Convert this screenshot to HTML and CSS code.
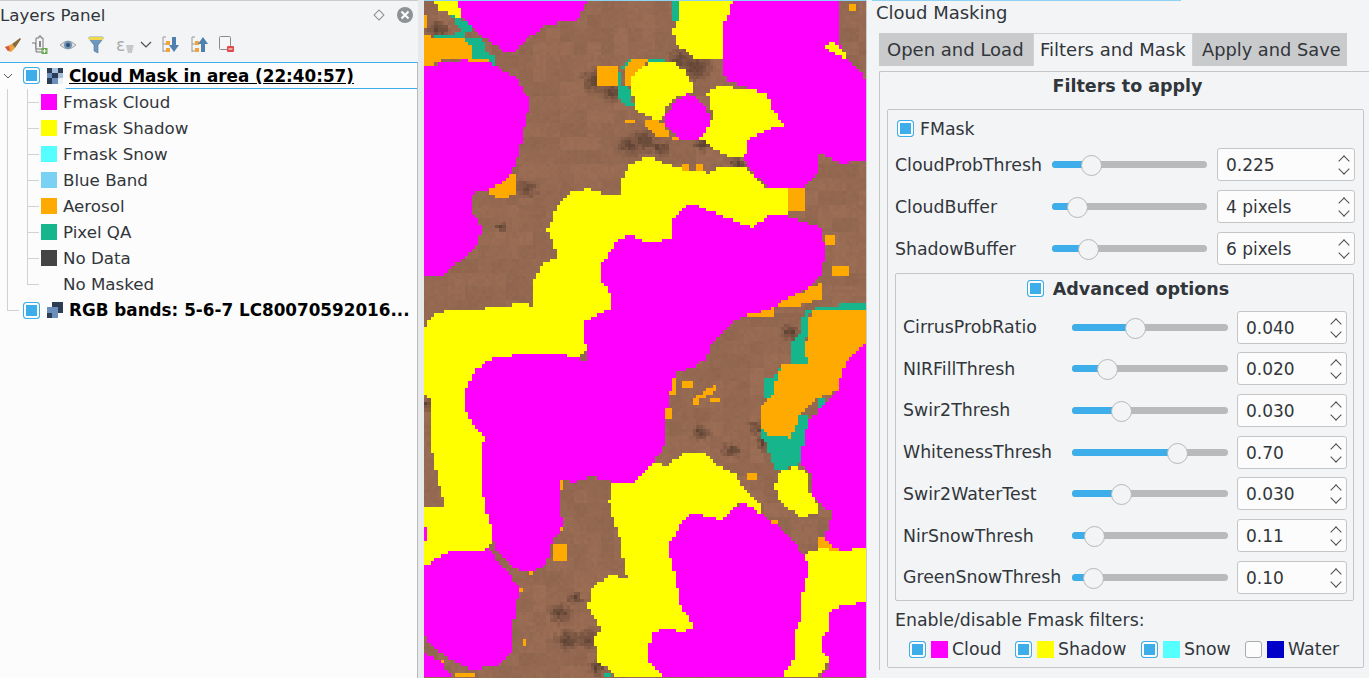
FILE: index.html
```html
<!DOCTYPE html>
<html lang="en">
<head>
  <meta charset="UTF-8">
  <title>Cloud Masking</title>
  <link rel="stylesheet" href="styles.css">
</head>
<body>
  <div class="app">
    <div class="layers">
      <div class="dock-title">
        <span class="dock-name">Layers Panel</span>
        <span class="dock-float"></span>
        <span class="dock-close">
          <svg width="16" height="16" viewBox="0 0 16 16"><path d="M4.5 4.5l7 7M11.5 4.5l-7 7" stroke="#fff" stroke-width="2" fill="none"/></svg>
        </span>
      </div>
      <div class="toolbar">
        <svg class="tool tool-brush" width="18" height="18" viewBox="0 0 18 18">
          <path d="M1 11l7-3 3 4-4 4-3-1z" fill="#e8a33d"/><path d="M1 11l4-1 1 4-2 1z" fill="#d9534f"/><path d="M8 8l8-6 1 1-6 9z" fill="#8a6a3a"/>
        </svg>
        <svg class="tool tool-add" width="18" height="20" viewBox="0 0 18 20">
          <path d="M1 8h4v9h7" fill="#eee" stroke="#777"/><path d="M5 3h3V1h2v2h2v11H5z" fill="#f4f4f4" stroke="#777"/><rect x="8" y="6" width="2" height="6" fill="#888"/><rect x="10.500" y="13" width="6" height="6" fill="#6aa84f"/><path d="M13.500 14v4M11.500 16h4" stroke="#fff"/>
        </svg>
        <svg class="tool tool-eye" width="18" height="14" viewBox="0 0 18 14">
          <path d="M1 7q8-8 16 0q-8 8-16 0z" fill="#dcdcdc" stroke="#aaa"/><circle cx="9" cy="7" r="4" fill="#6f93b5"/><circle cx="9" cy="7" r="2" fill="#2f4f6f"/>
        </svg>
        <svg class="tool tool-funnel" width="16" height="18" viewBox="0 0 16 18">
          <path d="M1 1h14v2l-5 6v8l-4-2V9L1 3z" fill="#6f97bd" stroke="#4d7396" stroke-width=".6"/><rect x="1" y="1" width="14" height="3" fill="#f0d74c"/>
        </svg>
        <span class="tool tool-expr">ε<svg width="10" height="8" viewBox="0 0 10 8"><path d="M1 0h8L7 8H3z" fill="#c6c8ca"/></svg></span>
        <svg class="tool tool-more" width="12" height="8" viewBox="0 0 12 8"><path d="M1 1l5 5 5-5" fill="none" stroke="#4d4d4d" stroke-width="1.200"/></svg>
        <svg class="tool tool-down" width="17" height="17" viewBox="0 0 17 17">
          <path d="M1 1h3M1 1v15M1 8h3M1 15h3" stroke="#999" fill="none"/><rect x="4" y="5" width="4" height="4" fill="#f2a33a"/><rect x="4" y="12" width="4" height="4" fill="#f2a33a"/><path d="M10 1h4v8h3l-5 7-5-7h3z" fill="#4f81b0"/>
        </svg>
        <svg class="tool tool-up" width="17" height="17" viewBox="0 0 17 17">
          <path d="M1 1h3M1 1v15M1 8h3M1 15h3" stroke="#999" fill="none"/><rect x="4" y="5" width="4" height="4" fill="#f2a33a"/><rect x="4" y="12" width="4" height="4" fill="#f2a33a"/><path d="M10 16h4V8h3l-5-7-5 7h3z" fill="#4f81b0"/>
        </svg>
        <svg class="tool tool-remove" width="15" height="17" viewBox="0 0 15 17">
          <rect x=".5" y=".5" width="11" height="13" rx="1" fill="#f6f6f6" stroke="#8b8b8b"/><rect x="8" y="10" width="7" height="6" rx="1" fill="#df4a4a"/><rect x="9.500" y="12.500" width="4" height="1" fill="#fff"/>
        </svg>
      </div>
      <div class="tree">
        <div class="tree-row root-row current">
          <svg class="twisty" width="10" height="6" viewBox="0 0 10 6"><path d="M1 1l4 4 4-4" fill="none" stroke="#555"/></svg>
          <span class="check on"></span>
          <span class="raster-icon"><i></i><i></i><i></i><i></i><i></i><i></i><i></i><i></i><i></i></span>
          <span class="layer-name underlined">Cloud Mask in area (22:40:57)</span>
        </div>
        <div class="legend">
          <div class="legend-row"><span class="swatch" style="background:#ff00ff"></span>Fmask Cloud</div>
          <div class="legend-row"><span class="swatch" style="background:#ffff00"></span>Fmask Shadow</div>
          <div class="legend-row"><span class="swatch" style="background:#55ffff"></span>Fmask Snow</div>
          <div class="legend-row"><span class="swatch" style="background:#79d2f4"></span>Blue Band</div>
          <div class="legend-row"><span class="swatch" style="background:#ffaa00"></span>Aerosol</div>
          <div class="legend-row"><span class="swatch" style="background:#17b58c"></span>Pixel QA</div>
          <div class="legend-row"><span class="swatch" style="background:#444444"></span>No Data</div>
          <div class="legend-row last"><span class="swatch"></span>No Masked</div>
        </div>
        <div class="tree-row top-row">
          <span class="check on"></span>
          <span class="raster-icon alt"><i></i><i></i><i></i><i></i><i></i><i></i><i></i><i></i><i></i></span>
          <span class="layer-name">RGB bands: 5-6-7 LC80070592016...</span>
        </div>
      </div>
    </div>

    <div class="map">
      <canvas id="map-canvas" width="130" height="200"></canvas>
    </div>

    <div class="masking">
      <div class="masking-title">Cloud Masking</div>
      <div class="tabs">
        <div class="tab">Open and Load</div>
        <div class="tab active">Filters and Mask</div>
        <div class="tab">Apply and Save</div>
      </div>
      <div class="tab-page">
        <div class="page-heading">Filters to apply</div>
        <div class="group">
          <div class="fmask-head"><span class="check on"></span>FMask</div>

          <div class="param"><span class="param-label">CloudProbThresh</span>
            <div class="slider"><div class="slider-fill" style="width:26%"></div></div>
            <div class="spin">0.225<span class="arrows"></span></div></div>
          <div class="param"><span class="param-label">CloudBuffer</span>
            <div class="slider"><div class="slider-fill" style="width:17%"></div></div>
            <div class="spin">4 pixels<span class="arrows"></span></div></div>
          <div class="param"><span class="param-label">ShadowBuffer</span>
            <div class="slider"><div class="slider-fill" style="width:24%"></div></div>
            <div class="spin">6 pixels<span class="arrows"></span></div></div>

          <div class="advanced">
            <div class="advanced-head"><span class="check on"></span>Advanced options</div>
            <div class="param"><span class="param-label">CirrusProbRatio</span>
              <div class="slider"><div class="slider-fill" style="width:41%"></div></div>
              <div class="spin">0.040<span class="arrows"></span></div></div>
            <div class="param"><span class="param-label">NIRFillThresh</span>
              <div class="slider"><div class="slider-fill" style="width:23%"></div></div>
              <div class="spin">0.020<span class="arrows"></span></div></div>
            <div class="param"><span class="param-label">Swir2Thresh</span>
              <div class="slider"><div class="slider-fill" style="width:32%"></div></div>
              <div class="spin">0.030<span class="arrows"></span></div></div>
            <div class="param"><span class="param-label">WhitenessThresh</span>
              <div class="slider"><div class="slider-fill" style="width:68%"></div></div>
              <div class="spin">0.70<span class="arrows"></span></div></div>
            <div class="param"><span class="param-label">Swir2WaterTest</span>
              <div class="slider"><div class="slider-fill" style="width:32%"></div></div>
              <div class="spin">0.030<span class="arrows"></span></div></div>
            <div class="param"><span class="param-label">NirSnowThresh</span>
              <div class="slider"><div class="slider-fill" style="width:15%"></div></div>
              <div class="spin">0.11<span class="arrows"></span></div></div>
            <div class="param"><span class="param-label">GreenSnowThresh</span>
              <div class="slider"><div class="slider-fill" style="width:14%"></div></div>
              <div class="spin">0.10<span class="arrows"></span></div></div>
          </div>

          <div class="filters-label">Enable/disable Fmask filters:</div>
          <div class="filters">
            <div class="filter filter-cloud"><span class="check on"></span><span class="filter-swatch" style="background:#ff00ff"></span>Cloud</div>
            <div class="filter filter-shadow"><span class="check on"></span><span class="filter-swatch" style="background:#ffff00"></span>Shadow</div>
            <div class="filter filter-snow"><span class="check on"></span><span class="filter-swatch" style="background:#55ffff"></span>Snow</div>
            <div class="filter"><span class="check"></span><span class="filter-swatch" style="background:#0000c8"></span>Water</div>
          </div>
        </div>
      </div>
    </div>
  </div>
  <script src="map.js"></script>
</body>
</html>
```

FILE: styles.css
```css
* {
  box-sizing: border-box;
}

html, body {
  margin: 0;
  padding: 0;
  height: 100%;
  overflow: hidden;
}

body {
  font-family: "DejaVu Sans", sans-serif;
  font-size: 17.33px;
  color: #31363b;
  background: #f3f4f6;
}

.app {
  display: flex;
  height: 678px;
  width: 1369px;
}

/* layers dock */

.layers {
  width: 418px;
  flex: none;
  display: flex;
  flex-direction: column;
  border-top: 1px solid #c9cbcd;
  font-size: 16.67px;
}

.dock-title {
  height: 27px;
  display: flex;
  align-items: center;
  padding-right: 5px;
}

.dock-name {
  flex: 1;
  padding-top: 1px;
}

.dock-float {
  width: 8px;
  height: 8px;
  border: 1px solid #8b8e91;
  transform: rotate(45deg);
  margin-right: 14px;
}

.dock-close {
  width: 16px;
  height: 16px;
  border-radius: 50%;
  background: #8e9295;
  display: flex;
}

.toolbar {
  height: 34px;
  display: flex;
  align-items: center;
  padding: 0 0 1px 4px;
}

.tool {
  flex: none;
}

.tool-add { margin-left: 9px; }
.tool-eye { margin-left: 10px; }
.tool-funnel { margin-left: 11px; }
.tool-more { margin-left: 5px; }
.tool-down { margin-left: 10px; }
.tool-up { margin-left: 12px; }
.tool-remove { margin-left: 11px; }

.tool-expr {
  margin-left: 12px;
  width: 19px;
  color: #a9abad;
  font-size: 17px;
  line-height: 16px;
  display: flex;
  align-items: flex-end;
}

.tree {
  flex: 1;
  background: #fcfcfc;
  border-right: 1px solid #b9bbbd;
  border-top: 1px solid #3daee9;
  position: relative;
}

.tree-row {
  height: 26px;
  display: flex;
  align-items: center;
  position: relative;
  padding-left: 23px;
}

.root-row {
  border-bottom: 1px solid #3daee9;
}

.root-row::after {
  content: "";
  position: absolute;
  left: 0;
  bottom: -1px;
  width: 66px;
  height: 1px;
  background: #fcfcfc;
}

.twisty {
  position: absolute;
  left: 3px;
  top: 10px;
}

.top-row::before {
  content: "";
  position: absolute;
  left: 7px;
  top: 0;
  width: 11px;
  height: 13px;
  border-left: 1px solid #cfd1d3;
  border-bottom: 1px solid #cfd1d3;
}

.layer-name {
  margin-left: 6px;
  font-weight: bold;
  font-size: 16.800px;
  color: #000;
  white-space: nowrap;
}

.underlined {
  text-decoration: underline;
}

.raster-icon {
  width: 16px;
  height: 16px;
  margin-left: 7px;
  display: grid;
  grid-template-columns: repeat(3, 1fr);
  grid-template-rows: repeat(3, 1fr);
  flex: none;
}

.raster-icon i:nth-child(1), .raster-icon i:nth-child(3), .raster-icon i:nth-child(5) { background: #2c3e55; }
.raster-icon i:nth-child(2), .raster-icon i:nth-child(6) { background: #a9c0da; }
.raster-icon i:nth-child(4), .raster-icon i:nth-child(7), .raster-icon i:nth-child(8) { background: #6a8fbd; }
.raster-icon i:nth-child(7) { background: #2c3e55; }
.raster-icon i:nth-child(9) { background: #eef2f7; }
.raster-icon.alt i:nth-child(1) { background: #fcfcfc; }
.raster-icon.alt i:nth-child(2), .raster-icon.alt i:nth-child(3) { background: #2c3e55; }
.raster-icon.alt i:nth-child(5) { background: #6a8fbd; }
.raster-icon.alt i:nth-child(6) { background: #2c3e55; }
.raster-icon.alt i:nth-child(9) { background: #fcfcfc; }

.legend {
  position: relative;
}

.legend::before {
  content: "";
  position: absolute;
  left: 7px;
  top: 0;
  bottom: 0;
  border-left: 1px solid #cfd1d3;
}

.legend-row {
  height: 26px;
  display: flex;
  align-items: center;
  padding-left: 41px;
  position: relative;
}

.legend-row::before {
  content: "";
  position: absolute;
  left: 27px;
  top: 0;
  width: 11px;
  height: 13px;
  border-left: 1px solid #cfd1d3;
  border-bottom: 1px solid #cfd1d3;
}

/* the trunk carries on below the branch, except on the last row */
.legend-row::after {
  content: "";
  position: absolute;
  left: 27px;
  top: 13px;
  height: 13px;
  border-left: 1px solid #cfd1d3;
}

.legend-row.last::after {
  display: none;
}

.swatch {
  width: 16px;
  height: 16px;
  margin-right: 6px;
  flex: none;
}

/* checkboxes */

.check {
  width: 17px;
  height: 17px;
  flex: none;
  border: 1px solid #a9abad;
  border-radius: 3px;
  background: #fcfcfc;
  display: inline-block;
  position: relative;
}

.check.on {
  border-color: #3daee9;
  box-shadow: inset 0 0 0 2px #fcfcfc;
  background: #3daee9;
}

/* map */

.map {
  width: 448px;
  flex: none;
  padding-left: 6px;
  overflow: hidden;
  background: #e7e8ea;
}

.map canvas {
  display: block;
  width: 442px;
  height: 680px;
  image-rendering: pixelated;
  border-top: 1px solid #8fd3f4;
}

/* masking dock */

.masking {
  flex: 1;
  min-width: 0;
  padding-left: 5px;
  border-left: 1px solid #c9cbcd;
  display: flex;
  flex-direction: column;
}

.masking-title {
  height: 33px;
  padding: 2px 0 0 4px;
  font-size: 18px;
  line-height: 20px;
  border-top: 1px solid #8fd3f4;
  margin-right: 188px;
}

.tabs {
  display: flex;
  height: 33px;
  margin-left: 7px;
  font-size: 18px;
}

.tab {
  padding: 0 8px;
  background: #c9cacc;
  line-height: 34px;
  white-space: nowrap;
}

.tab:first-child { width: 154px; }

.tab:last-child {
  width: 154px;
  padding-left: 9px;
  font-size: 17.800px;
}

.tab.active {
  width: 160px;
  padding: 0 6px;
  background: #f3f4f6;
  border: 1px solid #cfd1d3;
  border-bottom: none;
  line-height: 32px;
}

.tab-page {
  flex: 1;
  margin: 5px 0 8px 7px;
  border: 1px solid #c4c6c8;
  border-right: none;
  border-bottom: none;
  border-radius: 2px 0 0 0;
  padding: 0 5px 0 7px;
}

.page-heading {
  font-weight: bold;
  font-size: 17.500px;
  text-align: center;
  height: 37px;
  line-height: 29px;
  padding-right: 2px;
  margin-right: -6px;
}

.group {
  height: 559px;
  border: 1px solid #c4c6c8;
  border-radius: 2px;
  padding: 0 7px;
}

.fmask-head {
  height: 38px;
  display: flex;
  align-items: center;
  gap: 6px;
  padding: 0 0 1px 2px;
}

.param {
  display: flex;
  align-items: center;
  height: 33px;
  margin-bottom: 9px;
}

.param-label {
  width: 157px;
  flex: none;
  white-space: nowrap;
}

.slider {
  width: 155px;
  height: 7px;
  flex: none;
  border-radius: 4px;
  background: #b8babb;
  position: relative;
}

.slider-fill {
  height: 7px;
  border-radius: 4px 0 0 4px;
  background: #3daee9;
  position: relative;
}

.slider-fill::after {
  content: "";
  position: absolute;
  right: -10px;
  top: -6px;
  width: 19px;
  height: 19px;
  border-radius: 50%;
  background: #f3f4f5;
  border: 1px solid #b5b7b9;
}

.spin {
  margin-left: 10px;
  width: 138px;
  height: 33px;
  flex: none;
  background: #fcfcfc;
  border: 1px solid #c4c6c8;
  border-radius: 3px;
  padding-left: 8px;
  line-height: 32px;
  font-size: 17px;
  color: #31363b;
  position: relative;
}

/* up and down chevrons of a spin box */
.arrows {
  position: absolute;
  right: 6px;
  top: 7px;
  width: 9px;
  height: 17px;
}

.arrows::before, .arrows::after {
  content: "";
  position: absolute;
  left: 1px;
  width: 7px;
  height: 7px;
  border-left: 1px solid #4d4d4d;
  border-top: 1px solid #4d4d4d;
  transform: rotate(45deg);
}

.arrows::before { top: 1px; }

.arrows::after {
  top: 9px;
  transform: rotate(225deg);
}

.advanced {
  width: 459px;
  height: 328px;
  margin-top: -1px;
  border: 1px solid #c4c6c8;
  border-radius: 2px;
  padding: 0 7px;
}

.advanced .param { margin-bottom: 8.700px; }
.advanced .param-label { width: 169px; }
.advanced .slider { width: 156px; }
.advanced .spin { width: 110px; margin-left: 9px; }

.advanced-head {
  height: 29px;
  display: flex;
  align-items: center;
  justify-content: center;
  gap: 9px;
  font-weight: bold;
  font-size: 17.500px;
  margin: 0 0 7.600px 7px;
}

.filters-label {
  margin-top: 7px;
  height: 24px;
  line-height: 24px;
}

.filters {
  display: flex;
  padding-left: 14px;
  margin-top: 4px;
}

.filter {
  display: flex;
  align-items: center;
  height: 26px;
  white-space: nowrap;
}

.filter .check {
  margin-right: 5px;
}

.filter-swatch {
  width: 17px;
  height: 17px;
  margin-right: 4px;
}

.filter-cloud { width: 106px; }
.filter-shadow { width: 126px; }
.filter-snow { width: 104px; }
```

FILE: map.js
```js
// Classified raster, painted cell by cell on a small canvas that CSS scales up.
const CELL = 3.4;
const ORIGIN_X = 424;

const MAGENTA = '#ff00ff', YELLOW = '#ffff00', ORANGE = '#ffaa00', TEAL = '#17b58c';

// screen coordinates, first in the list wins
const polygons = [
  // a sliver of shadow that sits on top of the big cloud
  [YELLOW, [822,47,833,40,848,57,848,59,837,53]],
  // clouds
  [MAGENTA, [458,0,587,0,577,20,547,23,523,42,510,53,492,43,480,33,463,17]],
  [MAGENTA, [424,65,463,59,493,63,517,78,530,100,523,133,517,157,510,177,490,188,470,193,473,213,483,230,477,243,460,260,443,275,424,275]],
  [MAGENTA, [733,0,840,0,840,20,837,37,843,50,850,62,860,68,866,80,866,158,843,163,820,153,818,173,803,187,770,188,753,173,744,157,748,140,767,128,785,125,772,108,768,93,757,90,737,83,727,80,722,65,722,30]],
  [MAGENTA, [673,220,683,207,693,202,703,208,727,217,753,227,770,213,787,215,820,227,826,253,820,277,810,287,787,297,773,307,740,317,713,340,707,357,693,367,675,373,667,407,667,440,655,460,640,477,632,483,613,482,592,476,573,483,560,477,560,507,563,527,552,540,547,563,530,573,513,567,495,547,492,530,487,513,480,483,483,467,480,453,485,437,470,420,463,400,467,387,475,370,492,358,513,355,553,352,587,360,585,340,585,320,612,308,612,297,600,277,602,263,617,240,630,233,647,242,673,238]],
  [MAGENTA, [424,567,433,560,450,552,483,550,487,547,497,560,520,587,513,623,512,650,500,665,473,670,450,660,433,647,424,633]],
  [MAGENTA, [424,653,440,660,453,678,424,678]],
  [MAGENTA, [667,548,683,520,693,513,713,517,720,523,732,510,742,503,753,507,763,515,783,530,803,553,809,567,802,597,800,623,795,630,793,660,782,678,663,678,650,663,647,650,653,633,667,628,680,633,693,627,680,603,675,573]],
  [MAGENTA, [866,343,847,360,840,377,838,390,827,400,817,413,808,420,803,447,802,463,810,473,810,493,820,503,833,513,828,527,825,540,840,550,866,548]],
  [MAGENTA, [866,602,843,605,828,613,827,633,822,637,822,650,829,660,827,670,817,678,866,678]],
  [MAGENTA, [424,527,429,527,429,540,424,540]],
  [MAGENTA, [688,93,700,100,709,112,709,125,700,137,688,141,676,137,667,125,667,112,676,100]],
  // shadows
  [YELLOW, [432,0,458,0,463,13,466,18,457,17,450,13,440,10]],
  [YELLOW, [680,0,733,0,731,15,722,30,722,42,727,50,727,58,697,58,685,50,677,43,673,30,677,20,680,12]],
  [YELLOW, [657,60,670,60,683,68,690,78,693,90,677,97,666,108,662,120,650,117,637,110,632,90,633,75,643,65]],
  [YELLOW, [715,87,727,83,737,90,757,90,768,93,772,108,785,122,783,127,768,128,753,137,744,157,727,155,712,147,700,137,707,125,713,117,710,103,707,93]],
  [YELLOW, [630,163,648,155,667,163,687,170,710,172,723,165,745,167,763,185,787,188,787,215,770,213,773,240,700,300,585,352,500,400,490,550,424,573,424,505,446,507,446,503,440,490,435,463,430,443,430,427,432,400,424,393,424,340,424,328,433,315,447,310,463,310,493,307,520,303,534,305,534,280,543,263,558,257,552,240,547,230,552,220,558,203,570,192,587,188,603,193,622,192,622,177]],
  [YELLOW, [612,483,632,483,640,477,653,463,668,465,683,453,707,453,717,465,735,473,743,488,760,503,762,515,750,507,740,503,732,510,720,523,713,517,693,513,683,520,667,548,675,573,680,603,693,627,687,635,677,633,667,628,653,633,647,650,650,663,663,678,617,678,597,660,595,637,602,630,588,607,592,587,610,575,627,578,623,557,620,540,615,523,609,503]],
  [YELLOW, [775,487,778,473,795,465,808,473,810,493,820,507,817,513,803,517,790,510,780,500]],
  [YELLOW, [805,553,823,548,843,552,860,547,866,540,866,602,843,605,828,613,827,633,822,637,822,650,829,660,817,678,782,678,795,657,795,630,802,617,802,587,809,570]],
  // aerosol
  [ORANGE, [424,33,433,37,463,37,473,45,473,59,487,57,487,63,467,63,463,59,442,59,432,65,424,65]],
  [ORANGE, [623,65,633,59,650,59,633,75,632,86,623,86]],
  [ORANGE, [642,117,653,120,665,122,670,137,680,137,680,141,670,137,657,135,647,128]],
  [ORANGE, [517,175,517,195,510,195,498,198,490,193,490,188,500,183,508,175]],
  [ORANGE, [822,283,822,300,800,302,800,307,778,307,775,302,805,290,812,285]],
  [ORANGE, [809,317,813,310,866,310,866,343,847,360,843,377,838,390,817,398,800,415,795,427,790,437,768,435,762,427,762,405,773,395,777,375,782,365,808,363,805,353]],
  [ORANGE, [695,397,717,383,718,390,700,400]],
  // pixel qa
  [TEAL, [435,33,463,32,467,39,482,39,488,53,497,55,497,63,493,63,485,58,473,59,473,45,463,37,435,37]],
  [TEAL, [452,15,462,18,473,27,473,32,465,32,458,25]],
  [TEAL, [619,73,623,63,630,57,667,57,667,60,633,60,623,65,622,86,630,87,632,100,637,107,627,107,619,97]],
  [TEAL, [792,340,802,333,802,317,808,308,837,307,840,303,866,303,866,310,813,310,808,317,805,353,808,363,782,365,778,370,792,362]],
  [TEAL, [765,378,778,375,773,395,765,398]],
  [TEAL, [762,425,768,435,790,437,795,427,800,415,808,415,808,428,805,447,802,463,795,465,778,470,772,463,768,447,762,438]],
  [TEAL, [817,398,827,398,822,412,817,412]]
];

// small boxes: colour, x0, y0, x1, y1
const rects = [
  [TEAL, 673,0,680,20], [TEAL, 483,537,493,544], [TEAL, 605,673,612,678],
  [ORANGE, 424,13,429,28], [ORANGE, 598,66,619,86], [ORANGE, 625,120,636,124],
  [ORANGE, 683,164,690,171], [ORANGE, 697,162,704,175], [ORANGE, 788,188,805,212],
  [ORANGE, 849,2,856,9], [ORANGE, 833,266,849,276], [ORANGE, 826,236,836,246],
  [ORANGE, 745,303,775,315], [ORANGE, 667,378,677,395], [ORANGE, 693,398,700,405],
  [ORANGE, 710,398,721,402], [ORANGE, 667,408,673,419], [ORANGE, 683,382,693,387],
  [ORANGE, 748,472,757,479], [ORANGE, 552,544,568,560], [ORANGE, 558,520,563,532],
  [ORANGE, 561,480,564,490], [ORANGE, 523,640,527,646], [ORANGE, 513,609,517,615],
  [ORANGE, 520,588,524,592], [ORANGE, 530,572,534,575], [ORANGE, 440,660,446,666],
  [ORANGE, 453,673,475,678], [ORANGE, 620,676,632,678], [ORANGE, 820,537,838,550],
  [ORANGE, 850,553,860,563], [ORANGE, 772,520,776,524]
];

// dark patches in the bare ground: x, y, radius
const darkSpots = [
  [438,28,10], [596,80,13], [612,92,10], [680,58,10], [695,66,15], [630,145,12], [644,140,12],
  [660,147,9], [702,143,8], [737,163,7], [527,188,9], [500,227,5], [790,332,9],
  [700,432,8], [732,450,8], [757,427,7], [427,403,6], [560,613,10], [575,598,6],
  [568,640,11], [588,640,11], [597,668,7], [764,443,7]
];

const canvas = document.getElementById('map-canvas');
const ctx = canvas.getContext('2d');

// cheap repeatable noise so the ground keeps the same speckle on every load
let seed = 7;
function rand() {
  seed = (seed * 16807) % 2147483647;
  return seed / 2147483647;
}

function paintGround() {
  const patches = [];
  for (let i = 0; i < 3000; i++) patches.push(rand());

  for (let row = 0; row < canvas.height; row++) {
    for (let col = 0; col < canvas.width; col++) {
      const x = ORIGIN_X + (col + 0.5) * CELL;
      const y = (row + 0.5) * CELL;
      const coarse = patches[((row >> 2) * 37 + (col >> 2)) % 3000];
      let shade = 0.95 + coarse * 0.06 + rand() * 0.04;
      darkSpots.forEach(([sx, sy, r]) => {
        const d = (Math.hypot((x - sx) * 0.8, y - sy) + rand() * 5 - 2.5) / r;
        if (d < 1) shade = Math.min(shade, 0.62 + Math.max(d, 0) * 0.36);
      });
      ctx.fillStyle = `rgb(${150 * shade | 0},${106 * shade | 0},${82 * shade | 0})`;
      ctx.fillRect(col, row, 1, 1);
    }
  }
}

function paintClasses() {
  const shapes = polygons.map(([color, pts]) => {
    const path = new Path2D();
    for (let i = 0; i < pts.length; i += 2) path.lineTo(pts[i], pts[i + 1]);
    path.closePath();
    return { color, path };
  });
  const test = document.createElement('canvas').getContext('2d');

  for (let row = 0; row < canvas.height; row++) {
    for (let col = 0; col < canvas.width; col++) {
      const x = ORIGIN_X + (col + 0.5) * CELL;
      const y = (row + 0.5) * CELL;
      const hit = shapes.find((s) => test.isPointInPath(s.path, x, y));
      let color = hit ? hit.color : null;
      if (color !== MAGENTA && color !== YELLOW) {
        const box = rects.find(([c, x0, y0, x1, y1]) => x >= x0 && x < x1 && y >= y0 && y < y1);
        if (box) color = box[0];
      }
      if (color) {
        ctx.fillStyle = color;
        ctx.fillRect(col, row, 1, 1);
      }
    }
  }
}

paintGround();
paintClasses();
```
